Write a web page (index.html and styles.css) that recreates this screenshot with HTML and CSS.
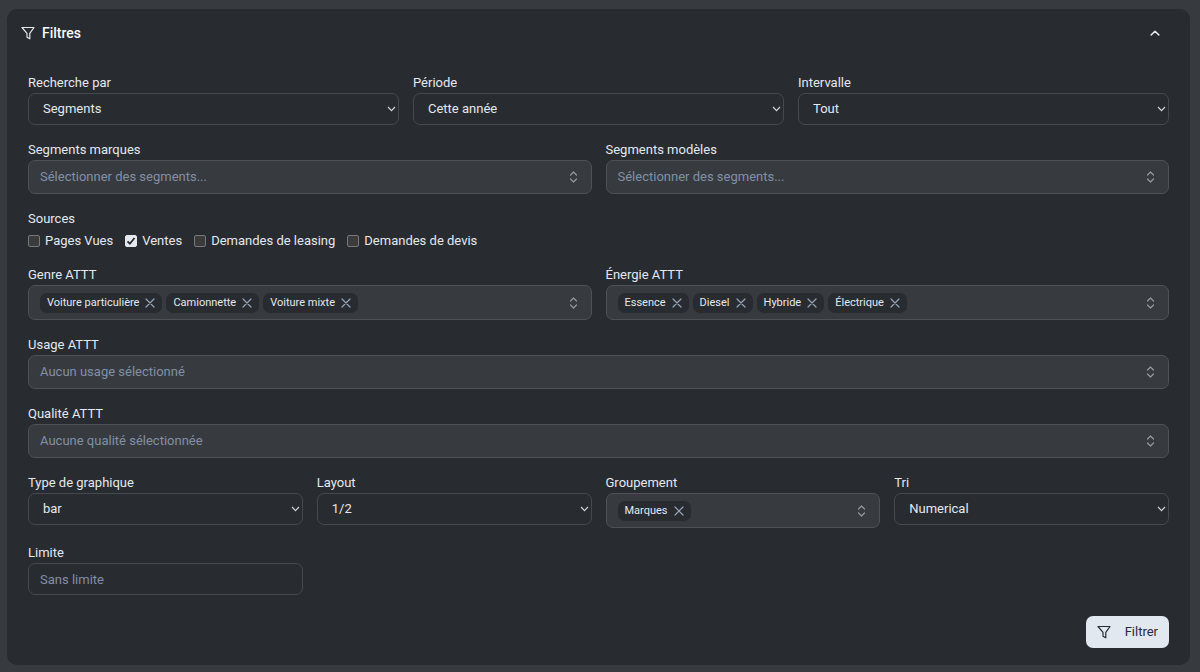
FILE: index.html
```html
<!DOCTYPE html>
<html lang="fr">
<head>
	<title>Filtres</title>
	<meta charset="utf-8">
	<meta name="viewport" content="width=device-width, initial-scale=1">
	<link rel="stylesheet" href="styles.css">
</head>

<body>
<svg class="sprite" aria-hidden="true">
	<symbol id="funnel" viewBox="0 0 14 14">
		<path d="M1 1.5h12L8.8 7.4v5.4L6 11.2V7.4z"/>
	</symbol>
	<symbol id="up" viewBox="0 0 10 6">
		<path d="M1.2 4.9L5 1.3l3.8 3.6"/>
	</symbol>
	<symbol id="updown" viewBox="0 0 8 12">
		<path d="M1 4l3-3 3 3M1 8l3 3 3-3"/>
	</symbol>
	<symbol id="cross" viewBox="0 0 10 10">
		<path d="M1 1l8 8M9 1l-8 8"/>
	</symbol>
</svg>

<form class="card">
	<header class="header">
		<svg class="funnel"><use href="#funnel"/></svg>
		<h1 class="title">Filtres</h1>
		<button type="button" class="icon-btn" aria-label="Replier"><svg class="up"><use href="#up"/></svg></button>
	</header>

	<div class="body">
		<div class="row cols-3">
			<div class="field">
				<label for="search">Recherche par</label>
				<select id="search" class="control"><option>Segments</option></select>
			</div>
			<div class="field">
				<label for="period">Période</label>
				<select id="period" class="control"><option>Cette année</option></select>
			</div>
			<div class="field">
				<label for="interval">Intervalle</label>
				<select id="interval" class="control"><option>Tout</option></select>
			</div>
		</div>

		<div class="row cols-2">
			<div class="field">
				<label for="brands">Segments marques</label>
				<div class="multi">
					<input id="brands" type="text" placeholder="Sélectionner des segments...">
					<button type="button" class="icon-btn" aria-label="Ouvrir"><svg class="updown"><use href="#updown"/></svg></button>
				</div>
			</div>
			<div class="field">
				<label for="models">Segments modèles</label>
				<div class="multi">
					<input id="models" type="text" placeholder="Sélectionner des segments...">
					<button type="button" class="icon-btn" aria-label="Ouvrir"><svg class="updown"><use href="#updown"/></svg></button>
				</div>
			</div>
		</div>

		<fieldset class="sources">
			<legend>Sources</legend>
			<div class="checks">
				<label class="check"><input type="checkbox">Pages Vues</label>
				<label class="check"><input type="checkbox" checked>Ventes</label>
				<label class="check"><input type="checkbox">Demandes de leasing</label>
				<label class="check"><input type="checkbox">Demandes de devis</label>
			</div>
		</fieldset>

		<div class="row cols-2">
			<div class="field">
				<label for="genre">Genre ATTT</label>
				<div class="multi tagged">
					<span class="tag">Voiture particulière<button type="button" class="icon-btn" aria-label="Retirer"><svg class="cross"><use href="#cross"/></svg></button></span>
					<span class="tag">Camionnette<button type="button" class="icon-btn" aria-label="Retirer"><svg class="cross"><use href="#cross"/></svg></button></span>
					<span class="tag">Voiture mixte<button type="button" class="icon-btn" aria-label="Retirer"><svg class="cross"><use href="#cross"/></svg></button></span>
					<input id="genre" type="text">
					<button type="button" class="icon-btn" aria-label="Ouvrir"><svg class="updown"><use href="#updown"/></svg></button>
				</div>
			</div>
			<div class="field">
				<label for="energy">Énergie ATTT</label>
				<div class="multi tagged">
					<span class="tag">Essence<button type="button" class="icon-btn" aria-label="Retirer"><svg class="cross"><use href="#cross"/></svg></button></span>
					<span class="tag">Diesel<button type="button" class="icon-btn" aria-label="Retirer"><svg class="cross"><use href="#cross"/></svg></button></span>
					<span class="tag">Hybride<button type="button" class="icon-btn" aria-label="Retirer"><svg class="cross"><use href="#cross"/></svg></button></span>
					<span class="tag">Électrique<button type="button" class="icon-btn" aria-label="Retirer"><svg class="cross"><use href="#cross"/></svg></button></span>
					<input id="energy" type="text">
					<button type="button" class="icon-btn" aria-label="Ouvrir"><svg class="updown"><use href="#updown"/></svg></button>
				</div>
			</div>
		</div>

		<div class="field">
			<label for="usage">Usage ATTT</label>
			<div class="multi">
				<input id="usage" type="text" placeholder="Aucun usage sélectionné">
				<button type="button" class="icon-btn" aria-label="Ouvrir"><svg class="updown"><use href="#updown"/></svg></button>
			</div>
		</div>

		<div class="field">
			<label for="quality">Qualité ATTT</label>
			<div class="multi">
				<input id="quality" type="text" placeholder="Aucune qualité sélectionnée">
				<button type="button" class="icon-btn" aria-label="Ouvrir"><svg class="updown"><use href="#updown"/></svg></button>
			</div>
		</div>

		<div class="row cols-4">
			<div class="field">
				<label for="chart">Type de graphique</label>
				<select id="chart" class="control"><option>bar</option></select>
			</div>
			<div class="field">
				<label for="layout">Layout</label>
				<select id="layout" class="control"><option>1/2</option></select>
			</div>
			<div class="field">
				<label for="group">Groupement</label>
				<div class="multi tagged">
					<span class="tag">Marques<button type="button" class="icon-btn" aria-label="Retirer"><svg class="cross"><use href="#cross"/></svg></button></span>
					<input id="group" type="text">
					<button type="button" class="icon-btn" aria-label="Ouvrir"><svg class="updown"><use href="#updown"/></svg></button>
				</div>
			</div>
			<div class="field">
				<label for="sort">Tri</label>
				<select id="sort" class="control"><option>Numerical</option></select>
			</div>
			<div class="field">
				<label for="limit">Limite</label>
				<input id="limit" class="control" type="text" placeholder="Sans limite">
			</div>
		</div>
	</div>

	<footer class="footer">
		<button type="submit" class="submit"><svg class="funnel"><use href="#funnel"/></svg>Filtrer</button>
	</footer>
</form>
</body>
</html>
```

FILE: styles.css
```css
* {
	box-sizing:border-box;
}

body {
	background:#373a3f;
	color:#e4e8ef;
	margin:0;
	padding:9px 10px 7px 7px;
	font-family:Roboto, sans-serif;
	font-size:13px;
	line-height:20px;
}

input, select, button {
	font:inherit;
	color:inherit;
}

svg {
	display:block;
	fill:none;
	stroke:currentColor;
	stroke-linecap:round;
	stroke-linejoin:round;
}

.sprite {
	display:none;
}

.card {
	background:#282b2f;
	border-radius:10px;
	padding:14px 21px 17px;
}

.header {
	display:flex;
	align-items:center;
	gap:7px;
	margin:0 9px 30px -7px;
}

.title {
	flex:1;
	margin:0;
	font-size:14px;
	font-weight:500;
	line-height:20px;
	color:#f6f8fb;
}

.icon-btn {
	display:block;
	padding:0;
	border:0;
	background:none;
}

.funnel {
	width:14px;
	height:14px;
	stroke-width:1.2;
}

.up {
	width:10px;
	height:6px;
	stroke-width:1.5;
}

.updown {
	width:9px;
	height:12px;
	color:#96999e;
	stroke-width:1.2;
}

.cross {
	width:10px;
	height:10px;
	color:#94a3b8;
	stroke-width:1.2;
}

.body {
	display:flex;
	flex-direction:column;
	gap:15px;
}

.row {
	display:grid;
	gap:15px 14px;
}

.cols-2 {
	grid-template-columns:repeat(2, 1fr);
}

.cols-3 {
	grid-template-columns:repeat(3, 1fr);
}

.cols-4 {
	grid-template-columns:repeat(4, 1fr);
}

.field {
	min-width:0;
}

.field > label {
	display:block;
}

.control {
	display:block;
	width:100%;
	height:32px;
	padding:0 11px;
	background:transparent;
	border:1px solid #45494e;
	border-radius:7px;
	outline:0;
}

select.control {
	appearance:none;
	padding:0 14px;
	background:url("data:image/svg+xml,%3Csvg xmlns='http://www.w3.org/2000/svg' viewBox='0 0 9 6' fill='none' stroke='%23d0d4da' stroke-width='1.2'%3E%3Cpath d='M1 1l3.5 3.6L8 1'/%3E%3C/svg%3E") no-repeat right 2px center / 9px 6px;
}

::placeholder {
	color:#8290a6;
	opacity:1;
}

.multi {
	display:flex;
	align-items:center;
	gap:4px;
	height:34px;
	padding:0 13px 0 11px;
	background:#373a3f;
	border:1px solid #4e5156;
	border-radius:7px;
}

.multi input {
	flex:1;
	min-width:0;
	padding:0;
	border:0;
	outline:0;
	background:none;
}

.tagged {
	height:35px;
}

.tag {
	display:flex;
	align-items:center;
	gap:6px;
	padding:0 7px;
	background:#282b2f;
	border-radius:7px;
	font-size:11px;
}

.sources {
	margin:0;
	padding:0;
	border:0;
}

.sources legend {
	padding:0;
}

.checks {
	display:flex;
	flex-wrap:wrap;
	gap:12px;
	padding-top:3px;
	line-height:18px;
}

.check {
	display:flex;
	align-items:center;
	gap:5px;
}

.check input {
	appearance:none;
	width:12px;
	height:12px;
	margin:0;
	background:#3b3b3b;
	border:1px solid #77787a;
	border-radius:2px;
}

.check input:checked {
	border-color:#e4e8ef;
	background:#e4e8ef url("data:image/svg+xml,%3Csvg xmlns='http://www.w3.org/2000/svg' viewBox='0 0 10 10' fill='none' stroke='%23282b2f' stroke-width='1.8'%3E%3Cpath d='M1.5 5.3l2.4 2.4L8.5 2'/%3E%3C/svg%3E") center / 10px 10px;
}

.footer {
	display:flex;
	justify-content:flex-end;
	margin-top:21px;
}

.submit {
	display:flex;
	align-items:center;
	gap:14px;
	height:32px;
	padding:0 11px;
	background:#e2e8f0;
	border:0;
	border-radius:7px;
	color:#282b38;
}
```
